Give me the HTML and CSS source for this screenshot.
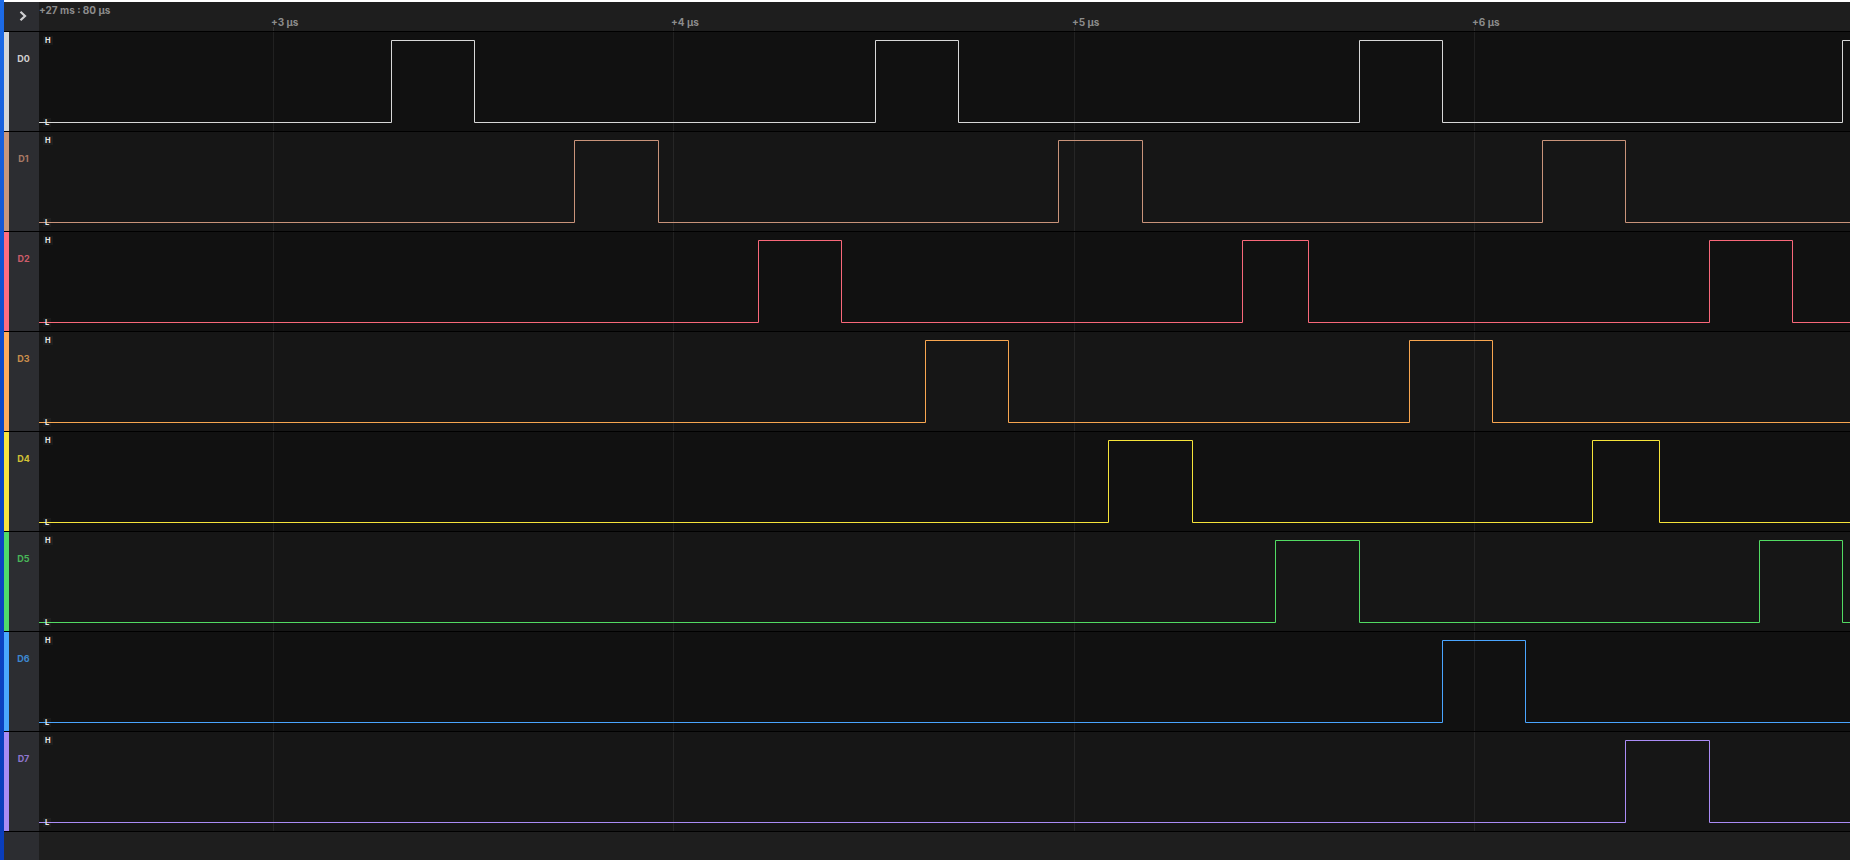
FILE: index.html
```html
<!DOCTYPE html>
<html lang="en">
<head>
<meta charset="utf-8">
<title>Logic Analyzer</title>
<link rel="stylesheet" href="styles.css">
</head>
<body>
<div class="app">
  <div class="rail"></div>
  <div class="main">
    <div class="header">
      <div class="corner">
        <svg class="chev" width="12" height="12" viewBox="0 0 12 12"><polyline points="2.5,1.8 7,6 2.5,10.2"/></svg>
      </div>
      <div class="ruler">
        <div class="origin">+27 ms : 80 µs</div>
        <div class="tick" style="left:234px"><span>+3 µs</span></div>
        <div class="tick" style="left:634px"><span>+4 µs</span></div>
        <div class="tick" style="left:1035px"><span>+5 µs</span></div>
        <div class="tick" style="left:1435px"><span>+6 µs</span></div>
      </div>
    </div>
    <div class="rows">
      <div class="row ch0">
        <div class="bar"></div>
        <div class="label">D0</div>
        <div class="plot">
          <svg class="wave" width="1811" height="99">
            <g class="grid"><line x1="234.5" y1="0" x2="234.5" y2="99"/><line x1="634.5" y1="0" x2="634.5" y2="99"/><line x1="1035.5" y1="0" x2="1035.5" y2="99"/><line x1="1435.5" y1="0" x2="1435.5" y2="99"/></g>
            <path d="M0 90.5 H352.5 V8.5 H435.5 V90.5 H836.5 V8.5 H919.5 V90.5 H1320.5 V8.5 H1403.5 V90.5 H1803.5 V8.5 H1811"/>
          </svg>
          <span class="hl h">H</span><span class="hl l">L</span>
        </div>
      </div>
      <div class="row ch1 alt">
        <div class="bar"></div>
        <div class="label">D1</div>
        <div class="plot">
          <svg class="wave" width="1811" height="99">
            <g class="grid"><line x1="234.5" y1="0" x2="234.5" y2="99"/><line x1="634.5" y1="0" x2="634.5" y2="99"/><line x1="1035.5" y1="0" x2="1035.5" y2="99"/><line x1="1435.5" y1="0" x2="1435.5" y2="99"/></g>
            <path d="M0 90.5 H535.5 V8.5 H619.5 V90.5 H1019.5 V8.5 H1103.5 V90.5 H1503.5 V8.5 H1586.5 V90.5 H1811"/>
          </svg>
          <span class="hl h">H</span><span class="hl l">L</span>
        </div>
      </div>
      <div class="row ch2">
        <div class="bar"></div>
        <div class="label">D2</div>
        <div class="plot">
          <svg class="wave" width="1811" height="99">
            <g class="grid"><line x1="234.5" y1="0" x2="234.5" y2="99"/><line x1="634.5" y1="0" x2="634.5" y2="99"/><line x1="1035.5" y1="0" x2="1035.5" y2="99"/><line x1="1435.5" y1="0" x2="1435.5" y2="99"/></g>
            <path d="M0 90.5 H719.5 V8.5 H802.5 V90.5 H1203.5 V8.5 H1269.5 V90.5 H1670.5 V8.5 H1753.5 V90.5 H1811"/>
          </svg>
          <span class="hl h">H</span><span class="hl l">L</span>
        </div>
      </div>
      <div class="row ch3 alt">
        <div class="bar"></div>
        <div class="label">D3</div>
        <div class="plot">
          <svg class="wave" width="1811" height="99">
            <g class="grid"><line x1="234.5" y1="0" x2="234.5" y2="99"/><line x1="634.5" y1="0" x2="634.5" y2="99"/><line x1="1035.5" y1="0" x2="1035.5" y2="99"/><line x1="1435.5" y1="0" x2="1435.5" y2="99"/></g>
            <path d="M0 90.5 H886.5 V8.5 H969.5 V90.5 H1370.5 V8.5 H1453.5 V90.5 H1811"/>
          </svg>
          <span class="hl h">H</span><span class="hl l">L</span>
        </div>
      </div>
      <div class="row ch4">
        <div class="bar"></div>
        <div class="label">D4</div>
        <div class="plot">
          <svg class="wave" width="1811" height="99">
            <g class="grid"><line x1="234.5" y1="0" x2="234.5" y2="99"/><line x1="634.5" y1="0" x2="634.5" y2="99"/><line x1="1035.5" y1="0" x2="1035.5" y2="99"/><line x1="1435.5" y1="0" x2="1435.5" y2="99"/></g>
            <path d="M0 90.5 H1069.5 V8.5 H1153.5 V90.5 H1553.5 V8.5 H1620.5 V90.5 H1811"/>
          </svg>
          <span class="hl h">H</span><span class="hl l">L</span>
        </div>
      </div>
      <div class="row ch5 alt">
        <div class="bar"></div>
        <div class="label">D5</div>
        <div class="plot">
          <svg class="wave" width="1811" height="99">
            <g class="grid"><line x1="234.5" y1="0" x2="234.5" y2="99"/><line x1="634.5" y1="0" x2="634.5" y2="99"/><line x1="1035.5" y1="0" x2="1035.5" y2="99"/><line x1="1435.5" y1="0" x2="1435.5" y2="99"/></g>
            <path d="M0 90.5 H1236.5 V8.5 H1320.5 V90.5 H1720.5 V8.5 H1803.5 V90.5 H1811"/>
          </svg>
          <span class="hl h">H</span><span class="hl l">L</span>
        </div>
      </div>
      <div class="row ch6">
        <div class="bar"></div>
        <div class="label">D6</div>
        <div class="plot">
          <svg class="wave" width="1811" height="99">
            <g class="grid"><line x1="234.5" y1="0" x2="234.5" y2="99"/><line x1="634.5" y1="0" x2="634.5" y2="99"/><line x1="1035.5" y1="0" x2="1035.5" y2="99"/><line x1="1435.5" y1="0" x2="1435.5" y2="99"/></g>
            <path d="M0 90.5 H1403.5 V8.5 H1486.5 V90.5 H1811"/>
          </svg>
          <span class="hl h">H</span><span class="hl l">L</span>
        </div>
      </div>
      <div class="row ch7 alt">
        <div class="bar"></div>
        <div class="label">D7</div>
        <div class="plot">
          <svg class="wave" width="1811" height="99">
            <g class="grid"><line x1="234.5" y1="0" x2="234.5" y2="99"/><line x1="634.5" y1="0" x2="634.5" y2="99"/><line x1="1035.5" y1="0" x2="1035.5" y2="99"/><line x1="1435.5" y1="0" x2="1435.5" y2="99"/></g>
            <path d="M0 90.5 H1586.5 V8.5 H1670.5 V90.5 H1811"/>
          </svg>
          <span class="hl h">H</span><span class="hl l">L</span>
        </div>
      </div>
    </div>
    <div class="footer">
      <div class="fcorner"></div>
      <div class="fplot"></div>
    </div>
  </div>
</div>
</body>
</html>
```
FILE: styles.css
```css
html, body {
  margin: 0;
  padding: 0;
  background: #ffffff;
}
body {
  width: 1850px;
  height: 860px;
  overflow: hidden;
  font-family: Inter, "Noto Sans", "Liberation Sans", sans-serif;
}
.app {
  display: flex;
  height: 860px;
}
.rail {
  flex: none;
  width: 4px;
  background: linear-gradient(180deg, #1d6ce8 0%, #0d48c8 45%, #0a3dbb 100%);
}
.main {
  flex: 1;
  min-width: 0;
  display: flex;
  flex-direction: column;
  padding-top: 2px;
}
.header {
  flex: none;
  display: flex;
  height: 29px;
  border-bottom: 1px solid #000;
}
.corner {
  flex: none;
  width: 35px;
  background: #2c2d31;
  box-sizing: border-box;
  padding: 8px 0 0 14px;
}
.chev {
  display: block;
}
.chev polyline {
  fill: none;
  stroke: #cfcfd2;
  stroke-width: 2.2;
}
.ruler {
  flex: 1;
  position: relative;
  background: #1e1e1e;
  overflow: hidden;
  color: #8c8c8c;
  font-size: 10px;
  font-weight: 700;
  line-height: 12px;
}
.origin {
  padding-top: 2px;
  padding-left: 0;
  white-space: nowrap;
}
.tick {
  position: absolute;
  top: 0;
  bottom: 0;
  width: 1px;
}
.tick::after {
  content: "";
  position: absolute;
  left: 0;
  bottom: 0;
  width: 1px;
  height: 4px;
  background: #333333;
}
.tick span {
  position: absolute;
  top: 14px;
  left: -2px;
  white-space: nowrap;
}
.rows {
  flex: none;
}
.row {
  display: flex;
  height: 99px;
  border-bottom: 1px solid #000;
}
.bar {
  flex: none;
  width: 5px;
  background: var(--bar);
}
.label {
  flex: none;
  width: 30px;
  box-sizing: border-box;
  padding: 20px 1px 0 0;
  background: #2c2d31;
  color: var(--txt);
  font-size: 9px;
  font-weight: 700;
  line-height: 14px;
  text-align: center;
}
.plot {
  flex: 1;
  position: relative;
  overflow: hidden;
  background: #111111;
}
.row.alt .plot {
  background: #161616;
}
.wave {
  display: block;
}
.wave path {
  fill: none;
  stroke: var(--line);
  stroke-width: 1;
}
.grid line {
  stroke: rgba(255, 255, 255, 0.07);
  stroke-width: 1;
}
.hl {
  position: absolute;
  left: 4px;
  padding: 0 2px;
  font-size: 7.5px;
  line-height: 9px;
  font-weight: 700;
  color: #e8e8e8;
  background: rgba(255, 255, 255, 0.04);
}
.hl.h {
  top: 4px;
}
.hl.l {
  top: 86px;
}
.footer {
  flex: 1;
  display: flex;
}
.fcorner {
  flex: none;
  width: 35px;
  background: #2c2d31;
}
.fplot {
  flex: 1;
  background: #1e1e1e;
}
.ch0 { --bar: #d6d6d6; --txt: #d0d0d0; --line: #d8d8d8; }
.ch1 { --bar: #c9977c; --txt: #a97a65; --line: #c9937a; }
.ch2 { --bar: #ff6d80; --txt: #cc5c6a; --line: #f9687a; }
.ch3 { --bar: #ffac5c; --txt: #c98e4c; --line: #f8a650; }
.ch4 { --bar: #f8e440; --txt: #d2c235; --line: #f6e43a; }
.ch5 { --bar: #4fdc6c; --txt: #48b658; --line: #52db63; }
.ch6 { --bar: #4aa8ff; --txt: #3d87d0; --line: #4aa5ff; }
.ch7 { --bar: #a98cf5; --txt: #8f76cf; --line: #ab8cf7; }
```
